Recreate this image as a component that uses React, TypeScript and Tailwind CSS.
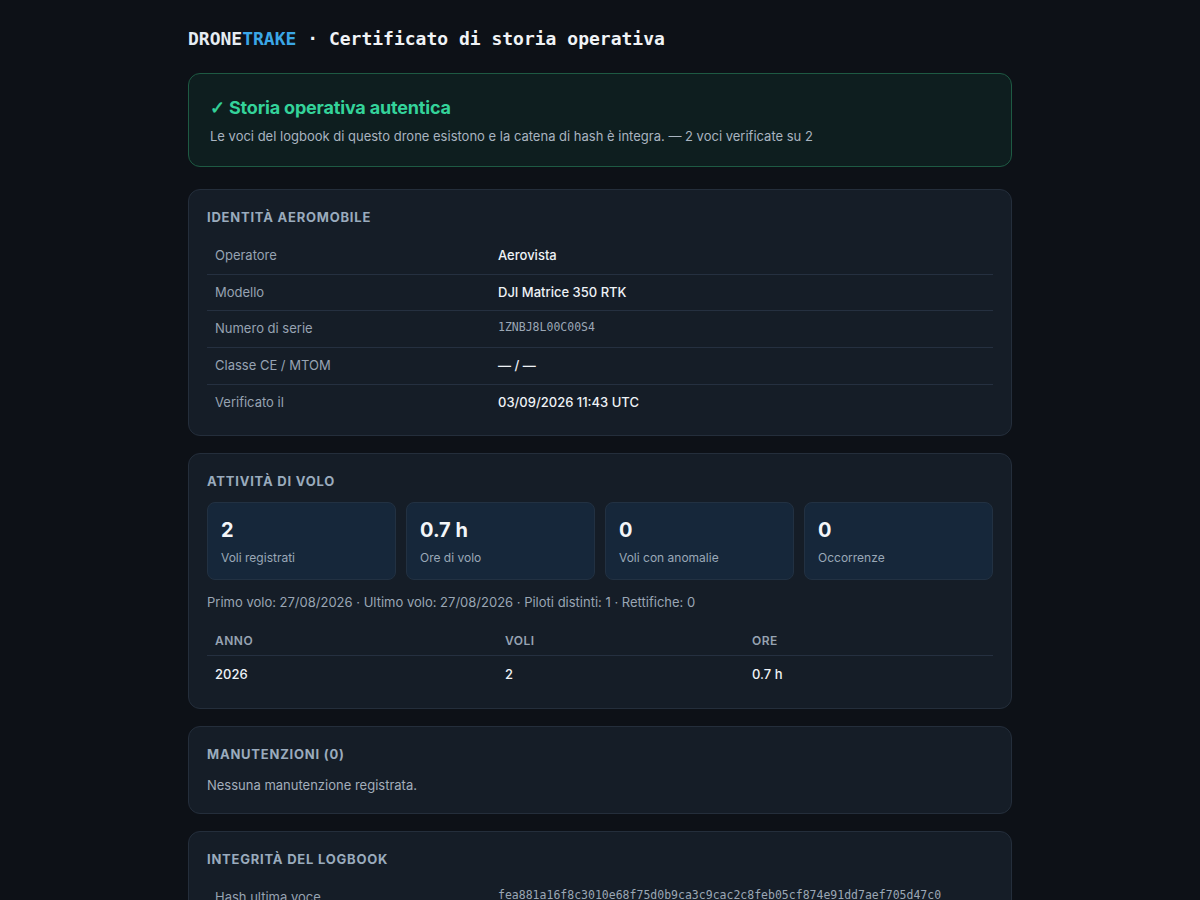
import type { ReactNode } from 'react'

const identity: [string, string, boolean?][] = [
  ['Operatore', 'Aerovista'],
  ['Modello', 'DJI Matrice 350 RTK'],
  ['Numero di serie', '1ZNBJ8L00C00S4', true],
  ['Classe CE / MTOM', '— / —'],
  ['Verificato il', '03/09/2026 11:43 UTC'],
]

const stats = [
  { value: '2', label: 'Voli registrati' },
  { value: '0.7 h', label: 'Ore di volo' },
  { value: '0', label: 'Voli con anomalie' },
  { value: '0', label: 'Occorrenze' },
]

function Card({ title, children }: { title: string; children: ReactNode }) {
  return (
    <section className="rounded-xl border border-[#242e3b] bg-[#151d27] px-[18px] pt-[17px] pb-[14px]">
      <h2 className="mb-[11px] text-[13px] font-bold uppercase leading-5 tracking-[0.06em] text-[#9aabbd]">
        {title}
      </h2>
      {children}
    </section>
  )
}

function Row({ label, value, mono, last }: { label: string; value: string; mono?: boolean; last?: boolean }) {
  return (
    <div className={`flex h-[36.7px] items-center ${last ? '' : 'border-b border-[#253040]'}`}>
      <div className="w-[291px] shrink-0 pl-2 text-[13px] text-[#97a3b2]">{label}</div>
      {mono ? (
        <div className="-mt-[4px] text-[11.5px] text-[#9ba7b5] font-['DejaVu_Sans_Mono',monospace]">{value}</div>
      ) : (
        <div className="text-[13px] font-medium text-[#eef2f6]">{value}</div>
      )}
    </div>
  )
}

export default function App() {
  return (
    <div className="min-h-[900px] bg-[#0d1117] font-['Inter',sans-serif] text-[#e6edf3]">
      <div className="mx-auto w-[824px] pt-[27px] pb-10">
        <h1 className="mb-[22px] text-[18px] font-bold leading-6 font-['DejaVu_Sans_Mono',monospace]">
          <span className="text-[#e6edf3]">DRONE</span>
          <span className="text-[#3ba7e6]">TRAKE</span>
          <span className="text-[#f0f3f6]"> · Certificato di storia operativa</span>
        </h1>

        <div className="mb-[22px] rounded-xl border border-[#1e5a43] bg-[#0e1e1f] px-[21px] pt-[22px] pb-[20px]">
          <div className="text-[18px] font-bold leading-6 tracking-[-0.01em] text-[#34d39a]">
            <span className="font-['DejaVu_Sans',sans-serif] font-bold [-webkit-text-stroke:0.6px_#34d39a]">✓</span> Storia operativa autentica
          </div>
          <p className="mt-[6px] text-[13px] leading-5 text-[#a9b4c0]">
            Le voci del logbook di questo drone esistono e la catena di hash è integra. — 2 voci verificate su 2
          </p>
        </div>

        <div className="flex flex-col gap-[17px]">
          <Card title="Identità aeromobile">
            <div className="mt-[3px]">
              {identity.map(([label, value, mono], i) => (
                <Row key={label} label={label} value={value} mono={mono} last={i === identity.length - 1} />
              ))}
            </div>
          </Card>

          <Card title="Attività di volo">
            <div className="grid grid-cols-4 gap-[10px]">
              {stats.map((s) => (
                <div key={s.label} className="h-[78px] rounded-lg border border-[#223142] bg-[#16273a] px-[13px] pt-[15px]">
                  <div className="text-[20px] font-bold leading-6 text-[#f3f6f9]">{s.value}</div>
                  <div className="mt-[8px] text-[12px] leading-4 text-[#9aa8b7]">{s.label}</div>
                </div>
              ))}
            </div>
            <p className="mt-[12px] text-[13px] leading-5 text-[#9aa6b4]">
              Primo volo: 27/08/2026 · Ultimo volo: 27/08/2026 · Piloti distinti: 1 · Rettifiche: 0
            </p>
            <div className="mt-[20px]">
              <div className="grid grid-cols-[290px_247px_1fr] border-b border-[#253040] pb-[5px] text-[12px] font-semibold uppercase tracking-[0.04em] text-[#97a3b2]">
                <div className="pl-2">Anno</div>
                <div className="pl-2">Voli</div>
                <div className="pl-2">Ore</div>
              </div>
              <div className="grid grid-cols-[290px_247px_1fr] pt-[9px] pb-[9px] text-[13px] font-medium text-[#eef2f6]">
                <div className="pl-2">2026</div>
                <div className="pl-2">2</div>
                <div className="pl-2">0.7 h</div>
              </div>
            </div>
          </Card>

          <Card title="Manutenzioni (0)">
            <p className="mt-[1px] pb-[4px] text-[13px] leading-5 text-[#a3aebb]">Nessuna manutenzione registrata.</p>
          </Card>

          <Card title="Integrità del logbook">
            <div className="mt-[3px]">
              <div className="flex h-[36.7px] items-center border-b border-[#253040]">
                <div className="w-[291px] shrink-0 pl-2 text-[13px] text-[#97a3b2]">Hash ultima voce</div>
                <div className="-mt-[4px] text-[11.5px] text-[#9ba7b5] font-['DejaVu_Sans_Mono',monospace]">
                  fea881a16f8c3010e68f75d0b9ca3c9cac2c8feb05cf874e91dd7aef705d47c0
                </div>
              </div>
              <Row label="Voci nella catena" value="2" last />
            </div>
          </Card>
        </div>
      </div>
    </div>
  )
}
